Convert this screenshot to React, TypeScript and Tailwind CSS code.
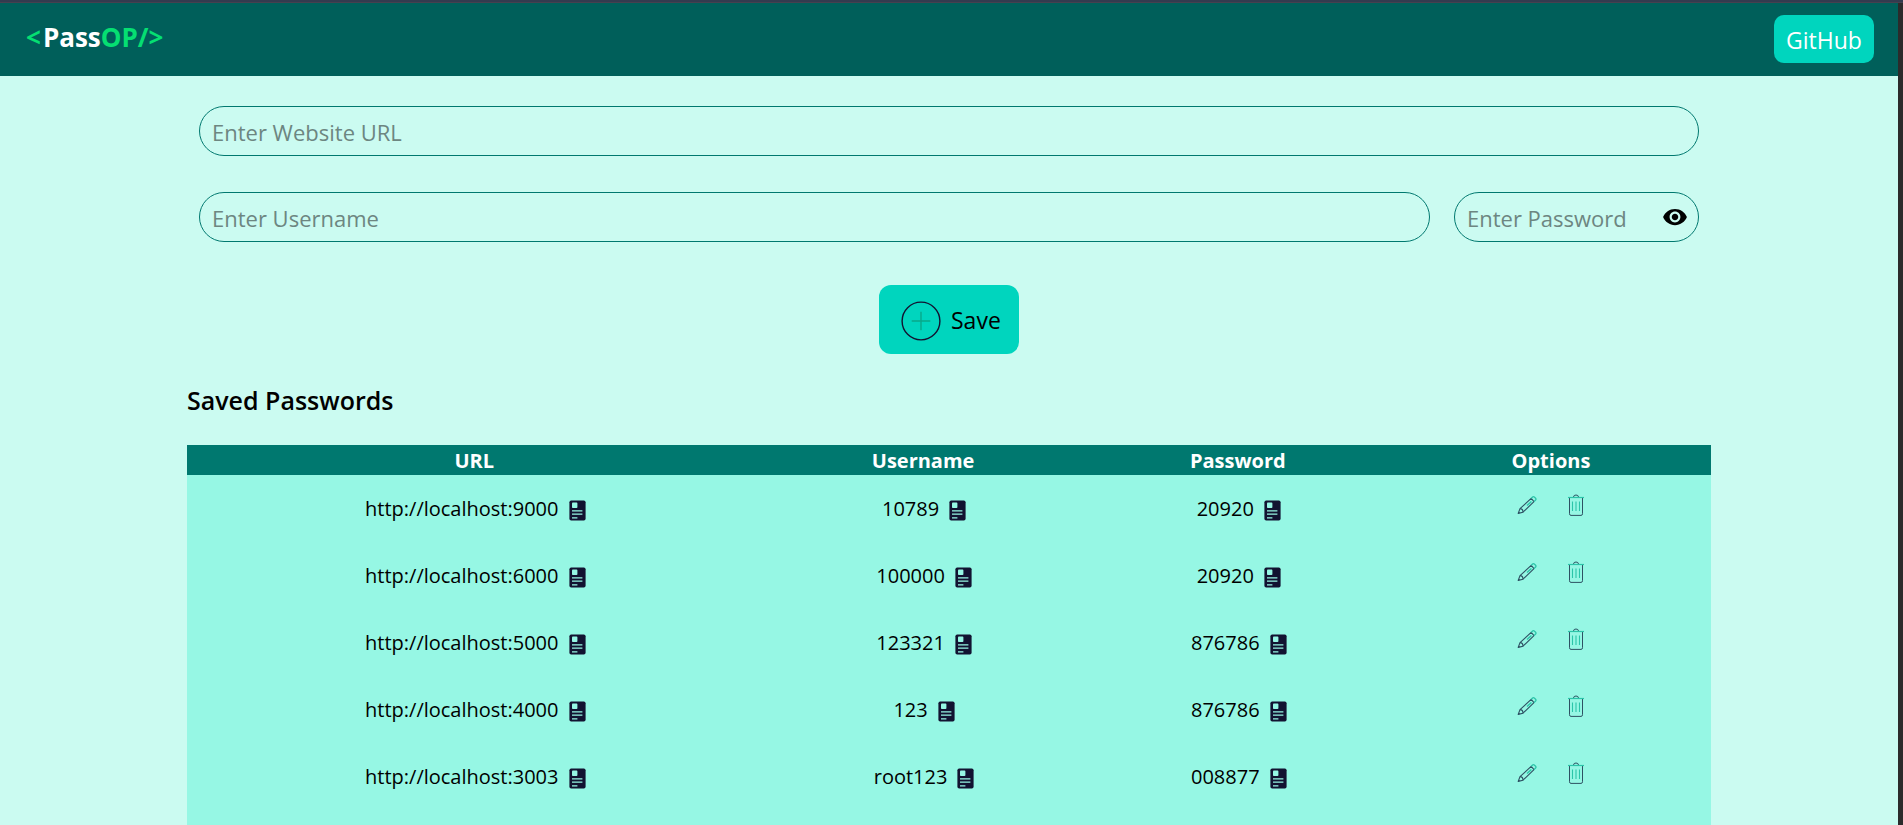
import { useState } from "react";
import { MdVisibility } from "react-icons/md";

type Entry = { url: string; username: string; password: string };

const entries: Entry[] = [
  { url: "http://localhost:9000", username: "10789", password: "20920" },
  { url: "http://localhost:6000", username: "100000", password: "20920" },
  { url: "http://localhost:5000", username: "123321", password: "876786" },
  { url: "http://localhost:4000", username: "123", password: "876786" },
  { url: "http://localhost:3003", username: "root123", password: "008877" },
];

function CopyIcon() {
  return (
    <svg viewBox="0 0 17 21" className="h-[21px] w-[17px]" aria-hidden="true">
      <rect x="0.4" y="0.4" width="16.2" height="20.2" rx="1.8" fill="#121331" />
      <rect x="3" y="2.6" width="5.4" height="5.4" rx="0.8" fill="#96f7e4" />
      <path d="M3 10.8H13.4M3 14.2H13.4M3 17.8H8.4" stroke="#96f7e4" strokeWidth="1.3" />
    </svg>
  );
}

function PlusIcon() {
  return (
    <svg viewBox="0 0 40 40" className="size-10" fill="none" aria-hidden="true">
      <circle cx="20" cy="20" r="18.9" stroke="#121331" strokeWidth="1.4" />
      <path d="M20 10.7V29.3M10.7 20H29.3" stroke="#08a88a" strokeWidth="1.4" />
    </svg>
  );
}

function PencilIcon() {
  return (
    <svg viewBox="0 0 20 20" className="size-5" fill="none" strokeWidth="1.1" strokeLinejoin="round" aria-hidden="true">
      <path d="M14.2 3.4L3 13.6L1.2 18.4L6 17.2L17 6.6Z" stroke="#2d5163" />
      <path d="M3 13.6C4.8 13.6 6 15 6 17.2M1.2 18.4L2.6 17.2" stroke="#2d5163" />
      <path d="M14.2 3.4L15.6 2Q16.4 1.2 17.3 2L18.6 3.2Q19.4 4 18.6 5L17 6.6" stroke="#2cc5a9" strokeWidth="1.3" />
      <path d="M10 10.6L14.4 6.4" stroke="#2cc5a9" strokeWidth="1.4" />
    </svg>
  );
}

function TrashIcon() {
  return (
    <svg viewBox="0 0 18 22" className="h-[22px] w-[18px]" fill="none" strokeWidth="1" aria-hidden="true">
      <path d="M5.5 7.5V17M9 7.5V17M12.5 7.5V17" stroke="#2cc5a9" strokeWidth="1.1" />
      <path d="M2.5 4V19.7Q2.5 21.4 4 21.4H14Q15.5 21.4 15.5 19.7V4" stroke="#2d5163" />
      <path d="M6.5 3Q6.6 1 9 1T11.5 3" stroke="#2d5163" />
      <path d="M1 3.5H17" stroke="#2cc5a9" strokeWidth="1.2" />
    </svg>
  );
}

function CopyCell({ text }: { text: string }) {
  return (
    <td className="p-0">
      <div className="flex items-center justify-center gap-2.5 pl-0.5">
        <span>{text}</span>
        <button type="button" aria-label={`Copy ${text}`} className="cursor-pointer pt-1">
          <CopyIcon />
        </button>
      </div>
    </td>
  );
}

const field =
  "h-[50px] w-full rounded-full border border-teal-700 bg-transparent px-3 pt-0.5 text-[22px] text-black placeholder:text-[#6d8681]";

export default function App() {
  const [visible, setVisible] = useState(false);

  return (
    <div className="flex min-h-screen flex-col bg-teal-100 font-['Open_Sans','Noto_Sans',sans-serif] text-black">
      <div className="h-[3px] border-b border-[#45414f] bg-[#333b4f]" />
      <div className="flex flex-1 border-r-5 border-[#2b2b2b]">
        <div className="flex flex-1 flex-col">
          <header className="flex h-[73px] items-center justify-between bg-teal-800 pr-6 pb-0.5 pl-[26px] text-white">
            <div className="flex pb-0.5 text-[26px] font-bold">
              <span className="mr-0.5 text-green-400">&lt;</span>
              <span>Pass</span>
              <span className="text-green-400">OP/&gt;</span>
            </div>
            <a
              href="https://github.com"
              className="flex h-12 w-[100px] items-center justify-center rounded-[10px] bg-teal-400 pt-1 text-[23px]"
            >
              GitHub
            </a>
          </header>

          <main className="flex flex-1 flex-col px-[187px]">
            <form
              className="flex flex-col items-center px-3 pt-[30px]"
              onSubmit={(event) => event.preventDefault()}
            >
              <input type="text" aria-label="Website URL" placeholder="Enter Website URL" className={field} />
              <div className="mt-9 flex w-full gap-6">
                <div className="flex-1">
                  <input type="text" aria-label="Username" placeholder="Enter Username" className={field} />
                </div>
                <div className="relative w-[245px]">
                  <input
                    type={visible ? "text" : "password"}
                    aria-label="Password"
                    placeholder="Enter Password"
                    className={field}
                  />
                  <button
                    type="button"
                    aria-label="Show password"
                    onClick={() => setVisible(!visible)}
                    className="absolute top-3 right-[11px] cursor-pointer"
                  >
                    <MdVisibility className="size-[26px]" />
                  </button>
                </div>
              </div>
              <button
                type="submit"
                className="mt-[43px] flex h-[69px] w-[140px] cursor-pointer items-center gap-2.5 rounded-xl bg-teal-400 pt-0.5 pl-[22px] text-[23px]"
              >
                <PlusIcon />
                Save
              </button>
            </form>

            <h2 className="mt-[26px] text-[25px] leading-10 font-semibold">Saved Passwords</h2>

            <div className="mt-[25px] flex-1 bg-teal-200">
              <table className="w-full table-fixed text-xl">
                <colgroup>
                  <col className="w-[37.7%]" />
                  <col className="w-[21.2%]" />
                  <col className="w-[20.1%]" />
                  <col className="w-[21%]" />
                </colgroup>
                <thead className="bg-teal-700 text-white">
                  <tr className="h-[30px] leading-7">
                    <th className="p-0 pt-0.5 font-bold">URL</th>
                    <th className="p-0 pt-0.5 font-bold">Username</th>
                    <th className="p-0 pt-0.5 font-bold">Password</th>
                    <th className="p-0 pt-0.5 font-bold">Options</th>
                  </tr>
                </thead>
                <tbody>
                  {entries.map((entry) => (
                    <tr key={entry.url} className="h-[67px]">
                      <CopyCell text={entry.url} />
                      <CopyCell text={entry.username} />
                      <CopyCell text={entry.password} />
                      <td className="p-0">
                        <div className="flex items-center justify-center gap-[30px] pb-2">
                          <button type="button" aria-label={`Edit ${entry.url}`} className="cursor-pointer">
                            <PencilIcon />
                          </button>
                          <button type="button" aria-label={`Delete ${entry.url}`} className="cursor-pointer">
                            <TrashIcon />
                          </button>
                        </div>
                      </td>
                    </tr>
                  ))}
                </tbody>
              </table>
            </div>
          </main>
        </div>
      </div>
    </div>
  );
}
